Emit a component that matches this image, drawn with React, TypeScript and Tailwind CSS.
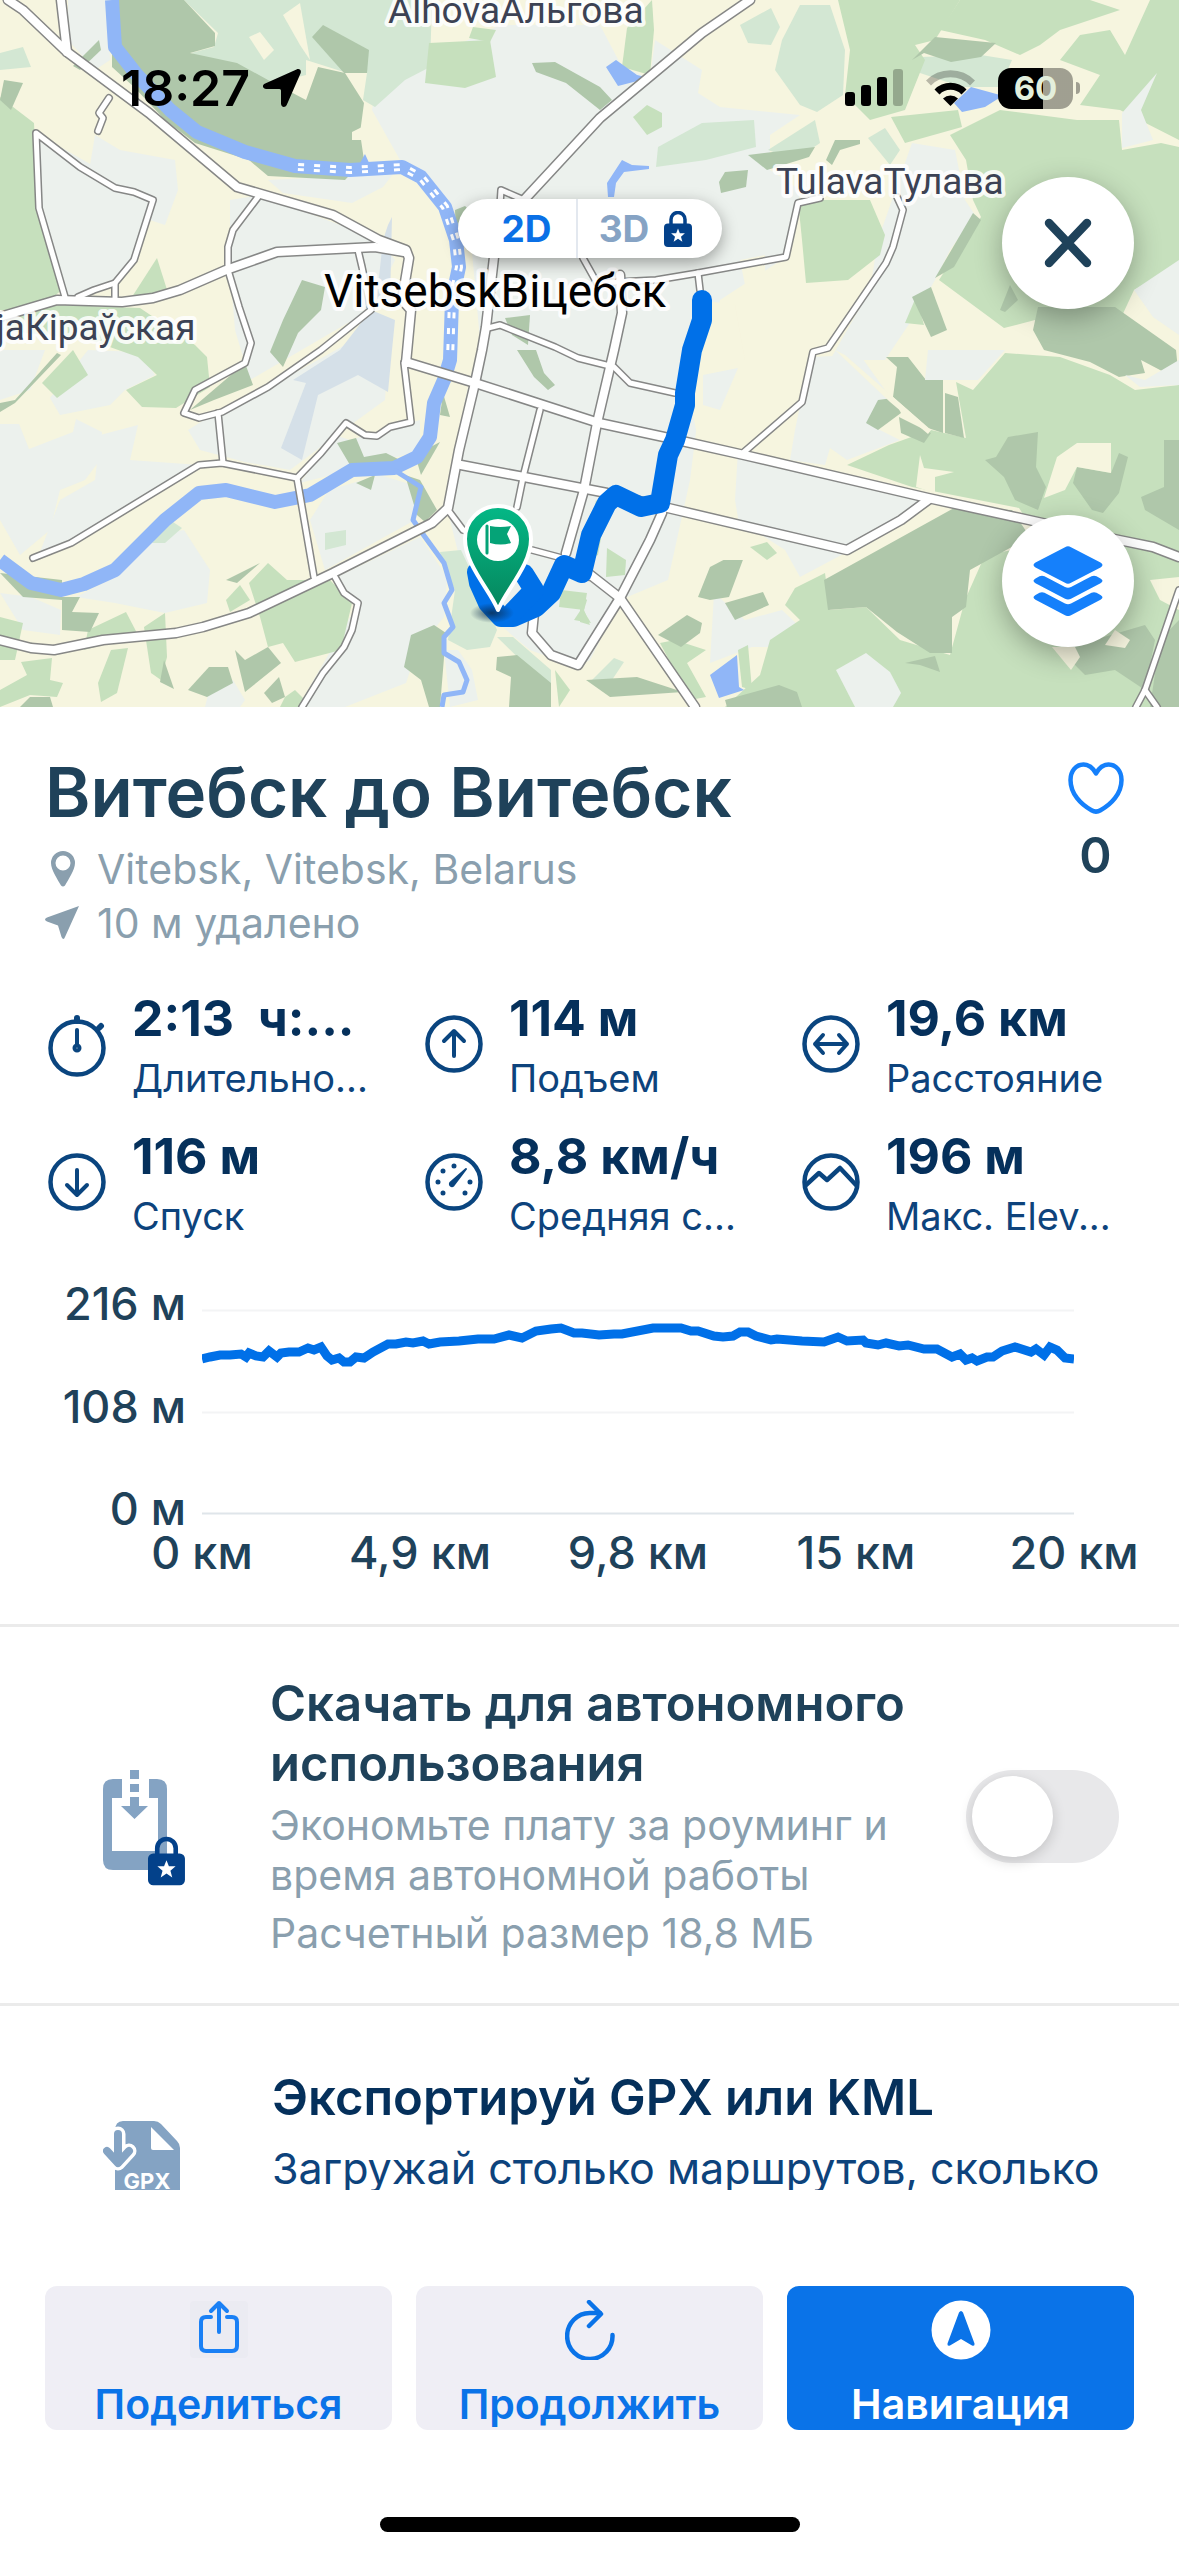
import type { ReactNode } from "react"

const urban = [
  "375,95 425,60 500,25 600,25 622,67 650,78 655,40 702,70 698,93 720,107 800,115 770,135 770,170 800,190 798,210 786,257 720,300 700,400 690,480 668,580 620,600 590,660 575,667 530,650 470,600 450,520 465,400 480,340 470,230 430,180 400,160 372,110",
  "36,133 153,200 134,260 115,287 65,297 40,207",
  "95,135 120,150 175,160 178,190 165,225 135,215 90,165",
  "230,200 260,195 380,240 395,260 370,310 250,380 235,330 230,270",
  "68,0 108,0 110,60 95,70 68,40",
  "125,55 130,37 142,30 153,50 155,57 148,78",
  "268,180 393,174 383,187 352,203 283,193",
  "0,424 19,424 29,449 73,432 76,419 102,432 100,460 85,480 60,490 50,530 20,555 0,520",
  "100,435 138,425 130,460 200,465 75,545 40,552 60,500 95,480",
  "188,430 220,410 300,370 390,320 385,400 330,440 290,470 245,462 200,450",
  "0,350 45,350 30,390 0,400",
  "88,350 140,352 155,375 125,390 110,405 60,415 50,398",
  "76,597 115,577 145,537 184,530 210,570 207,603 165,613 115,603",
  "0,593 31,597 61,610 60,635 23,630",
  "329,490 380,475 413,485 415,520 325,570 310,520",
  "337,577 420,537 447,577 444,617 417,650 406,683 345,707 298,707 356,607",
  "300,483 335,435 350,440 420,420 420,450 370,465",
  "912,143 955,150 965,200 975,215 950,250 935,280 915,315 885,360 830,360 870,290 878,240",
  "810,357 860,355 890,397 870,425 900,440 847,460 830,448 825,465 790,460 795,430",
  "715,460 744,457 920,500 847,552 800,577 785,550 730,515 733,480",
  "714,593 745,620 782,610 800,627 779,647 752,647 710,663",
  "458,650 472,670 478,700 450,707 444,650",
  "210,687 233,680 245,700 240,707 205,707",
  "707,375 740,368 720,410 700,405",
]

const paleWoods = [
  "184,0 432,0 430,67 405,80 375,107 363,100 367,73 344,72 306,60 306,75 275,83 249,77 191,53 214,47 218,33",
  "0,53 23,47 31,67 0,70",
  "782,40 800,5 830,5 845,50 843,95 817,112 800,105 775,70",
  "740,25 771,8 780,27 771,45 748,43",
  "658,147 702,123 754,120 756,147 733,153 706,160 656,167",
  "768,150 815,120 820,143 795,160",
  "920,57 981,55 1012,60 1000,87 962,87 920,73",
  "440,552 461,550 469,567 497,630 490,647 467,650 448,640 455,590 444,567",
  "497,637 513,637 551,670 551,690",
  "325,533 346,530 346,545 325,550",
  "170,520 182,528 165,543 152,543",
  "592,680 614,658 624,662 610,683",
  "868,138 885,128 900,150 890,165",
]

const woods = [
  "429,43 490,40 496,77 465,88 425,83",
  "473,27 496,30 490,42 469,38",
  "0,97 34,123 38,207 65,287 50,300 23,313 0,313",
  "130,300 157,258 168,293 150,300",
  "0,308 60,305 140,308 195,345 207,357 210,387 176,408 142,407 126,390 157,375 138,357 90,340 0,330",
  "42,383 73,350 88,375 57,398",
  "249,583 268,563 287,580 330,580 352,603 341,650 295,662 283,643 268,647 260,617",
  "88,630 126,612 138,635 84,650",
  "144,627 165,613 167,657 161,680 151,673",
  "111,650 128,648 117,693 101,702 98,683",
  "0,617 23,623 15,660 0,660",
  "21,662 52,658 50,680 63,683 57,697 30,695 0,707 0,690 27,675",
  "226,600 240,585 250,600 230,612",
  "285,697 295,690 305,700 298,707 280,707",
  "555,670 570,690 559,707",
  "561,590 587,593 584,610 559,607",
  "582,608 591,623 574,620",
  "596,500 606,510 598,555 585,560",
  "607,548 626,560 625,575 606,577",
  "580,593 587,600 584,610 590,625 580,622",
  "838,0 960,0 935,40 915,45 925,60 905,110 870,120 845,95 850,50",
  "940,30 960,0 1090,0 1120,10 1060,30 1040,45 1020,55 985,40",
  "1060,60 1080,35 1110,30 1125,55 1150,0 1179,0 1179,140 1120,110 1080,105 1100,75",
  "950,135 1000,110 1077,120 1119,120 1122,150 1161,143 1179,147 1179,265 1134,290 1120,320 1035,320 1004,328 939,280 958,250 981,217 973,200 966,160",
  "627,28 652,0 654,30 650,75 622,67",
  "633,117 647,105 662,113 662,127 647,135",
  "891,117 958,110 962,127 905,143",
  "798,200 870,200 885,235 880,255 848,280 806,283 802,240",
  "905,323 916,297 924,325",
  "1005,353 973,390 956,382 966,438 931,430 889,445 847,465 912,487 1019,508 1040,540 1179,560 1179,385 1135,390 1110,375 1060,357",
  "785,605 795,588 825,573 830,610 866,607 900,640 950,655 965,600 985,555 1040,545 1179,555 1179,707 725,707 760,675 770,640 800,620",
  "750,547 767,542 777,553 767,560",
  "660,643 675,640 706,650 687,663 706,697 690,700",
  "738,650 748,645 752,690 742,687",
]

const denseWoods = [
  "115,0 184,0 215,33 215,46 190,53 237,63 268,80 306,100 318,67 345,73 364,103 360,133 364,160 345,180 268,176 249,160 195,143 165,120 134,87 112,67 112,45",
  "323,25 369,50 367,73 344,73 312,37",
  "532,63 555,62 600,87 612,100 600,110 566,83 536,72",
  "4,80 23,83 11,110 0,100",
  "99,40 101,50 80,70 73,66",
  "302,280 325,287 321,310 298,333 287,358 283,367 270,352 283,320",
  "0,403 15,400 57,353 61,355 15,403 0,412",
  "245,363 253,385 214,400 190,410",
  "226,580 260,563 237,583",
  "62,597 80,597 72,612 99,613 90,632 62,630",
  "0,573 23,597 62,600 62,580",
  "30,697 50,697 53,707 20,707",
  "188,690 209,667 228,667 233,683 207,697",
  "235,650 245,660 268,647 281,663 245,692 239,667",
  "264,693 279,677 285,697 272,703",
  "164,660 174,689 160,682",
  "411,635 434,625 446,633 440,707 429,707 421,680 404,667",
  "497,657 517,655 551,683 551,707 509,707 511,677 496,670",
  "337,443 356,438 364,457 386,453 400,460 395,470 350,465",
  "356,483 375,475 371,490",
  "405,475 420,480 437,510 425,522 417,515",
  "415,455 440,442 421,475",
  "443,393 450,417 440,415",
  "517,350 536,350 544,373 555,385 548,390 534,377",
  "505,318 530,315 528,345 512,335",
  "455,210 465,206 475,215 456,235",
  "719,182 725,172 748,170 746,187 721,193",
  "748,155 815,147 809,157 767,170",
  "826,160 835,140 860,140 860,144 840,150 832,165",
  "912,60 935,37 996,43 981,57 951,62 924,53",
  "973,213 981,220 954,267 935,278",
  "912,297 931,287 947,330 931,337",
  "1038,307 1115,307 1176,350 1179,380 1141,360 1145,373 1119,377 1090,362 1044,350 1033,330",
  "1000,310 1010,285 1018,300 1005,312",
  "886,357 908,357 926,380 943,380 943,433 928,428 893,397 897,367",
  "866,423 878,400 893,398 901,413 878,430",
  "899,417 931,433 924,443 901,433",
  "945,393 958,397 964,438 945,433",
  "939,350 966,353 978,373",
  "1008,437 1038,432 1036,467 1046,487 1038,510 1015,500 1004,477 985,460 996,457",
  "1077,467 1111,473 1119,453 1128,457 1119,493 1103,513 1092,510 1073,483",
  "1164,440 1179,440 1179,530 1145,510 1141,497 1164,487",
  "824,580 954,508 1012,510 1030,537 970,570 966,607 952,617 952,653 930,653 897,632 866,607 828,610",
  "698,597 710,567 733,555 744,557 729,597 710,600",
  "725,603 763,592 769,605 735,620",
  "658,635 687,615 702,623 700,633 681,647",
  "725,700 779,685 797,692 802,707 727,707",
  "586,680 637,677 683,692 610,697",
  "905,663 935,656 940,672 920,665",
  "1060,650 1145,625 1155,640 1145,690 1115,670 1085,675",
  "1160,640 1179,620 1179,707 1150,707",
]

const clearings = [
  "249,37 260,32 274,50 264,60",
  "283,15 300,3 310,60 300,45",
  "352,132 366,125 366,140 352,140",
  "1057,457 1077,443 1111,443 1111,473 1077,467 1065,490 1044,498",
  "920,455 924,468 954,472 935,477 935,493 916,487",
  "1052,647 1075,647 1080,657 1071,670",
  "835,350 845,355 931,430 928,434 890,402",
  "1115,630 1130,640 1125,648 1105,645",
  "1150,580 1179,577 1179,610 1160,600",
  "700,300 735,305 745,360 730,400 738,450 735,500 745,560 720,560 690,550 700,450 690,400",
  "740,260 765,255 765,290 745,285",
]

const fields = [
  "928,350 1005,350 978,380 947,380 925,380",
  "1122,113 1157,73 1141,110 1153,140 1122,148",
  "1134,290 1179,260 1179,335 1153,317",
  "836,670 866,653 890,672 901,693 893,707 855,707",
  "1125,375 1145,380 1179,360 1179,385 1140,387",
  "703,375 738,368 720,410 703,405",
]

const lakes = [
  "616,60 637,75 649,78 618,86 606,67",
  "622,160 632,165 649,166 649,169 624,172 616,183 614,197 608,197 607,183",
  "954,103 971,87 1000,95 1020,85 996,100 985,107 962,112",
  "710,675 737,655 739,687 744,690 719,698",
  "360,163 365,154 370,165",
]

const airfields = [
  "371,310 395,320 392,350 388,392 358,375 318,395 302,460 281,448 306,383 293,380 340,350",
  "388,225 392,217 390,300 376,305 383,240",
]

const mainRoads = [
  "8,0 23,10 67,52 149,113 237,187 333,215 379,240 406,250 409,258 402,300 411,310 406,363",
  "61,0 67,52",
  "0,317 57,300 122,302 153,298 180,290 226,270 277,252 375,247 404,252",
  "0,640 31,648 54,650 103,640 176,633 203,627 249,613 333,573 432,523 448,508 459,450 475,383 482,350 486,327 494,257",
  "406,362 475,383 599,423 664,437 744,455 928,498 1038,522 1119,540 1153,547 1179,557",
  "524,200 600,118 702,33 750,0",
  "461,465 524,477 607,493 668,508 847,550 901,520 928,500",
  "620,275 622,313 614,350 597,423 584,490 566,553",
  "662,513 650,540 620,598 578,665 551,655 532,633 534,613",
  "588,573 620,598 695,707",
]

const sideRoads = [
  "65,297 39,208 36,133 80,167 115,188 134,192 153,200 134,260 115,283 115,300",
  "78,297 94,290 115,283",
  "109,98 99,113 103,118 98,131",
  "258,197 233,230 228,247 228,270 239,307 251,343 245,363 195,390 184,413 199,418 222,412 268,387 321,350 371,310 362,267 358,250",
  "218,413 223,463",
  "33,558 71,543 199,465 222,463 297,478 321,453 346,423 365,435 377,436 390,427 411,422 404,363",
  "297,478 314,577",
  "335,577 344,593 358,603 352,630 344,647 323,673 302,707",
  "540,410 524,473 517,507",
  "583,258 597,283 656,280 698,273 786,257 798,203 820,198",
  "698,273 700,290",
  "488,328 500,325 555,347 578,358 614,367 630,383 675,393",
  "500,205 501,190 524,200",
  "897,197 903,210 893,247 886,263 828,348 813,352 802,402 744,452",
  "448,510 463,530 532,550 562,558 589,577",
  "1179,590 1145,690 1136,707",
  "1145,690 1157,707",
]

const river =
  "112,0 115,47 137,75 170,110 197,132 245,152 295,166 350,170 402,167 421,177 445,207 456,240 459,267 452,300 450,360 444,380 434,403 430,437 417,457 394,468 352,470 310,495 275,502 226,490 199,493 165,520 115,570 84,584 61,590 31,583 0,560"
const rapids = "298,167 350,170 402,167 421,177 445,207 456,240 459,267 452,300 450,360"
const stream =
  "394,470 421,487 413,520 425,537 444,563 452,590 444,603 453,627 444,637 444,653 459,662 467,680 463,692 444,695 442,707"
const route =
  "702,300 702,320 692,350 685,393 685,405 675,440 668,455 660,503 641,507 616,495 607,503 591,535 582,573 564,565 551,593 536,607 513,617 501,617 488,603 479,583 477,572"

const elevation =
  "0,50 8,48 18,46 28,46 39,45 44,48 47,44 54,47 61,48 67,42 75,48 79,44 87,43 97,43 106,39 112,41 119,38 125,47 130,51 137,49 142,53 148,53 154,48 162,49 171,43 186,35 194,35 204,33 211,34 221,32 227,35 238,33 257,32 276,30 292,30 307,26 320,29 334,22 349,20 359,19 372,24 380,24 397,26 412,25 420,25 451,19 479,19 489,22 496,22 512,27 521,28 531,27 538,23 546,23 554,27 569,31 575,30 600,32 622,33 636,28 645,32 661,31 664,34 676,36 684,34 697,37 706,36 722,40 735,40 750,48 758,45 764,51 770,49 775,52 785,48 791,48 800,42 813,38 829,43 834,40 842,46 848,38 855,41 863,49 872,50"

const STAR = "M0-6 1.6-2 6-2 2.6 1 3.8 5.4 0 2.8-3.8 5.4-2.6 1-6-2-1.6-2Z"

function Areas({ shapes, fill }: { shapes: string[]; fill: string }) {
  return (
    <g fill={fill}>
      {shapes.map((points) => (
        <polygon key={points} points={points} />
      ))}
    </g>
  )
}

function Roads({ lines, stroke, width }: { lines: string[]; stroke: string; width: number }) {
  return (
    <g fill="none" stroke={stroke} strokeWidth={width} strokeLinejoin="round" strokeLinecap="round">
      {lines.map((points) => (
        <polyline key={points} points={points} />
      ))}
    </g>
  )
}

function PlaceName({ x, y, size, fill, children }: { x: number; y: number; size: number; fill: string; children: string }) {
  return (
    <text
      x={x}
      y={y}
      fontSize={size}
      fill={fill}
      stroke="#fff"
      strokeWidth={8}
      strokeLinejoin="round"
      strokeOpacity={0.85}
      paintOrder="stroke"
      fontFamily="Roboto, sans-serif"
    >
      {children}
    </text>
  )
}

function RouteMap() {
  return (
    <svg viewBox="0 0 1179 707" preserveAspectRatio="xMidYMid slice" className="block size-full" aria-label="Карта маршрута">
      <defs>
        <linearGradient id="pin" x1="0" y1="0" x2="0" y2="1">
          <stop offset="0" stopColor="#04b886" />
          <stop offset="1" stopColor="#06855c" />
        </linearGradient>
        <radialGradient id="pin-shadow">
          <stop offset="0" stopColor="#0b2a4a" stopOpacity="0.8" />
          <stop offset="1" stopColor="#0b2a4a" stopOpacity="0" />
        </radialGradient>
      </defs>
      <rect width="1179" height="707" fill="#f6f5df" />
      <Areas shapes={urban} fill="#ecf1ed" />
      <Areas shapes={paleWoods} fill="#d3e7d3" />
      <Areas shapes={woods} fill="#c6e0bd" />
      <Areas shapes={denseWoods} fill="#afc7aa" />
      <Areas shapes={clearings} fill="#f6f5df" />
      <Areas shapes={fields} fill="#ecf1ed" />
      <Areas shapes={airfields} fill="#d5e0e8" />
      <Areas shapes={lakes} fill="#90b6f7" />
      <polyline points={river} fill="none" stroke="#90b6f7" strokeWidth="14" strokeLinejoin="round" />
      <polyline points={stream} fill="none" stroke="#90b6f7" strokeWidth="5" strokeLinejoin="round" />
      <polyline points={rapids} fill="none" stroke="#fff" strokeWidth="8" strokeDasharray="6 10" />
      <polyline points={rapids} fill="none" stroke="#90b6f7" strokeWidth="2" />
      <Roads lines={sideRoads} stroke="#868786" width={8} />
      <Roads lines={mainRoads} stroke="#868786" width={11} />
      <Roads lines={sideRoads} stroke="#fff" width={5} />
      <Roads lines={mainRoads} stroke="#fff" width={8} />
      <Roads lines={[route, "513,612 534,590 524,574"]} stroke="#0070e8" width={20} />

      <ellipse cx="492" cy="613" rx="22" ry="10" fill="url(#pin-shadow)" />
      <path
        d="M498 610C490 590 465 565 465 539a33 33 0 0 1 66 0c0 26-25 51-33 71Z"
        fill="url(#pin)"
        stroke="#fff"
        strokeWidth="4"
        strokeLinejoin="round"
      />
      <circle cx="498" cy="540" r="21" fill="#fff" />
      <path d="M487 526v27" stroke="#05a377" strokeWidth="3" strokeLinecap="round" />
      <path d="M490 526q10 2 21 0l-4 8 4 9q-10 3-21 0Z" fill="#05a377" />

      <PlaceName x={388} y={23} size={37} fill="#3c4254">AlhovaАльгова</PlaceName>
      <PlaceName x={776} y={194} size={37} fill="#3c4254">TulavaТулава</PlaceName>
      <PlaceName x={-4} y={340} size={37} fill="#3c4254">jaКіраўская</PlaceName>
      <PlaceName x={324} y={307} size={46} fill="#000">VitsebskВіцебск</PlaceName>
    </svg>
  )
}

function StatusBar() {
  return (
    <div className="absolute inset-x-0 top-0 flex h-44 items-center justify-between pr-[99px] pl-[121px] text-black">
      <div className="flex items-center gap-3">
        <span className="text-[50px] leading-none font-semibold">18:27</span>
        <svg width="40" height="40" viewBox="0 0 40 40" fill="currentColor" aria-hidden="true">
          <path d="M34.500 1.500 3.200 15.500C-.5 17.200.6 21 4.300 21H17.500Q19 21 19 22.500V35.500C19 39.300 23.200 40.200 24.800 36.700L38.500 5.500C39.800 2.300 37.500.2 34.500 1.500Z" />
        </svg>
      </div>
      <div className="flex items-center gap-[23px]">
        <svg width="58" height="38" viewBox="0 0 58 38" aria-label="Сигнал">
          <rect y="23" width="10" height="14" rx="3" />
          <rect x="16" y="16" width="10" height="21" rx="3" />
          <rect x="32" y="8" width="10" height="29" rx="3" />
          <rect x="48" width="10" height="37" rx="3" opacity="0.25" />
        </svg>
        <svg width="49" height="38" viewBox="0 0 49 38" fill="none" stroke="#000" strokeWidth="7" aria-label="Wi-Fi">
          <path d="M2.500 14a31 31 0 0 1 44 0" opacity="0.25" />
          <path d="M11 23a19 19 0 0 1 27 0" />
          <path d="M24.500 37 17 29.500a11 11 0 0 1 15 0Z" fill="#000" stroke="none" />
        </svg>
        <div className="flex items-center gap-[3px]">
          <div className="flex h-[41px] w-[75px] items-center justify-center rounded-[13px] bg-linear-to-r from-black from-60% to-black/35 to-60% text-[33px] leading-none font-bold text-[#e3efdc]">
            60
          </div>
          <div className="h-3 w-1 rounded-r-full bg-black/35" />
        </div>
      </div>
    </div>
  )
}

function StarLock({ className }: { className: string }) {
  return (
    <svg viewBox="0 0 28 36" className={className} aria-hidden="true">
      <path d="M7 14V8.500a7 7 0 0 1 14 0V14" fill="none" stroke="#03418a" strokeWidth="3.500" />
      <rect y="12.500" width="28" height="23.500" rx="4" fill="#03418a" />
      <path d={STAR} transform="translate(14 24.500) scale(1.150)" fill="#fff" />
    </svg>
  )
}

function RoundButton({ label, className, children }: { label: string; className: string; children: ReactNode }) {
  return (
    <button
      type="button"
      aria-label={label}
      className={`absolute right-[45px] flex size-[132px] items-center justify-center rounded-full bg-white shadow-[0_8px_28px_rgba(0,0,0,0.3)] ${className}`}
    >
      {children}
    </button>
  )
}

interface StatProps {
  icon: ReactNode
  value: string
  label: string
}

function Stat({ icon, value, label }: StatProps) {
  return (
    <div className="flex items-center gap-[26px]">
      <svg
        viewBox="0 0 58 76"
        className="h-[76px] w-[58px] shrink-0"
        fill="none"
        stroke="#0a457f"
        strokeWidth="4"
        strokeLinecap="round"
        strokeLinejoin="round"
        aria-hidden="true"
      >
        {icon}
      </svg>
      <dl className="flex min-w-0 flex-col-reverse whitespace-nowrap">
        <dt className="text-[38px] leading-[60px] text-[#0d437c]">{label}</dt>
        <dd className="text-[50px] leading-[60px] font-bold whitespace-pre text-[#05305b]">{value}</dd>
      </dl>
    </div>
  )
}

const ring = <circle cx="29" cy="34" r="26.500" strokeWidth="4.500" />

const stats: StatProps[] = [
  {
    value: "2:13  ч:...",
    label: "Длительно...",
    icon: (
      <>
        <circle cx="29" cy="38" r="26.500" strokeWidth="4.500" />
        <path d="M29 8v3M51 18l2-2" strokeWidth="6" />
        <path d="M29 20v15" />
        <circle cx="29" cy="38" r="2.500" strokeWidth="4" />
      </>
    ),
  },
  { value: "114 м", label: "Подъем", icon: <>{ring}<path d="M29 46V22M19 31l10-10 10 10" /></> },
  { value: "19,6 км", label: "Расстояние", icon: <>{ring}<path d="M13 34h32M21 25l-8 9 8 9M37 25l8 9-8 9" /></> },
  { value: "116 м", label: "Спуск", icon: <>{ring}<path d="M29 22v24M19 37l10 10 10-10" /></> },
  {
    value: "8,8 км/ч",
    label: "Средняя с...",
    icon: (
      <>
        {ring}
        <path d="M41 21 25.500 34.500a2 2 0 0 0 3 3Z" fill="#0a457f" strokeWidth="2" />
        <path d="M29 18h0M18 23h0M13 34h0M18 45h0M40 45h0M45 34h0" strokeWidth="5" />
      </>
    ),
  },
  { value: "196 м", label: "Макс. Elev...", icon: <>{ring}<path d="m4 37 13-12 8 7 13-12 16 17" strokeWidth="4.500" /></> },
]

function ElevationChart() {
  return (
    <figure className="mt-[34px] pr-[105px] pl-[45px] text-[45px] leading-[48px] font-medium text-[#1f425a]">
      <div className="flex">
        <div className="flex h-[253px] w-[141px] flex-col justify-between text-right">
          <span>216 м</span>
          <span>108 м</span>
          <span>0 м</span>
        </div>
        <div className="ml-4 flex-1 pt-[29px]">
          <svg viewBox="0 0 872 206" preserveAspectRatio="none" className="h-[206px] w-full" aria-label="Профиль высоты">
            <path d="M0 1.500h872M0 103.500h872" stroke="#f3f4f5" strokeWidth="2" />
            <path d="M0 204.500h872" stroke="#dfe5ea" strokeWidth="2" />
            <polyline points={elevation} fill="none" stroke="#0070e8" strokeWidth="9" />
          </svg>
        </div>
      </div>
      <div className="-mt-1 ml-[157px] flex justify-between whitespace-nowrap">
        {["0 км", "4,9 км", "9,8 км", "15 км", "20 км"].map((km) => (
          <span key={km} className="flex w-0 justify-center">
            {km}
          </span>
        ))}
      </div>
    </figure>
  )
}

export default function App() {
  return (
    <div className="flex h-screen flex-col overflow-hidden bg-white font-['Inter','Liberation_Sans',sans-serif]">
      <header className="relative h-[707px] shrink-0 overflow-hidden">
        <RouteMap />
        <StatusBar />
        <div className="absolute top-[199px] left-1/2 flex h-[59px] w-[264px] -translate-x-1/2 rounded-full bg-white text-[37px] font-bold shadow-[0_5px_16px_rgba(0,0,0,0.35)]">
          <button type="button" className="flex w-[120px] items-center justify-center border-r-2 border-[#e3e8ef] pl-5 text-[#0a70e6]">
            2D
          </button>
          <button type="button" className="flex flex-1 items-center justify-center gap-[15px] pr-2 text-[#86a3c4]">
            3D
            <StarLock className="h-9 w-7" />
          </button>
        </div>
        <RoundButton label="Закрыть" className="top-[177px]">
          <svg width="48" height="50" viewBox="0 0 48 50" stroke="#1f425a" strokeWidth="8.500" strokeLinecap="round">
            <path d="m5 5 38 40M43 5 5 45" />
          </svg>
        </RoundButton>
        <RoundButton label="Слои карты" className="top-[515px]">
          <svg width="70" height="70" viewBox="0 0 70 70" fill="#1580fb">
            <path d="M32 1.200Q35-.5 38 1.200L67.500 16.500Q71.500 19 67.500 21.500L38 36.800Q35 38.500 32 36.800L2.500 21.500Q-1.500 19 2.500 16.500Z" />
            <path d="m2.500 32.500 4-2.200q2.500-1.200 5 0L32 41q3 1.500 6 0l20.500-10.700q2.500-1.200 5 0l4 2.200q4 2.300 0 4.800L38 52.800q-3 1.500-6 0L2.500 37.300q-4-2.500 0-4.800Z" />
            <path d="m2.500 49 4-2.200q2.500-1.200 5 0L32 57.500q3 1.500 6 0l20.500-10.700q2.500-1.200 5 0l4 2.200q4 2.300 0 4.800L38 69.300q-3 1.500-6 0L2.500 53.800q-4-2.500 0-4.800Z" />
          </svg>
        </RoundButton>
      </header>

      <main className="min-h-0 flex-1 overflow-hidden">
        <section className="flex items-start justify-between pt-[43px] pr-[45px] pl-[45px]">
          <div className="text-[41px] leading-[54px] text-[#8a9fae]">
            <h1 className="mb-2 text-[69px] leading-[84px] font-semibold text-[#1f425a]">Витебск до Витебск</h1>
            <p className="flex items-center gap-[18px]">
              <svg width="34" height="36" viewBox="0 0 34 36" fill="currentColor" aria-hidden="true">
                <path
                  fillRule="evenodd"
                  d="M18 0a12 12 0 0 1 12 12c0 7-7 17-10 22.500q-2 2-4 0C13 29 6 19 6 12A12 12 0 0 1 18 0Zm0 4.500a7.500 7.500 0 1 0 0 15 7.500 7.500 0 0 0 0-15Z"
                />
              </svg>
              Vitebsk, Vitebsk, Belarus
            </p>
            <p className="flex items-center gap-[18px]">
              <svg width="34" height="34" viewBox="0 0 34 34" fill="currentColor" aria-hidden="true">
                <path d="M34 0 20 31q-1.500 4-3.500 0L13 19.500 2 15.500q-4-2 0-4Z" />
              </svg>
              10 м удалено
            </p>
          </div>
          <button type="button" aria-label="В избранное" className="flex w-[77px] flex-col items-center pt-3 text-[#1f425a]">
            <svg width="56" height="52" viewBox="0 0 56 52" fill="none" stroke="#1580fb" strokeWidth="4.500" strokeLinejoin="round">
              <path d="M28 11.500C24.500 5 20 2.500 15.500 2.500 8 2.500 2.500 9 2.500 18 2.500 32 13 42.500 23.500 48.300Q28 51 32.500 48.300C43 42.500 53.500 32 53.500 18 53.500 9 48 2.500 40.500 2.500 36 2.500 31.500 5 28 11.500Z" />
            </svg>
            <span className="mt-3 text-[49px] leading-[60px] font-semibold">0</span>
          </button>
        </section>

        <section className="mt-[38px] grid grid-cols-3 gap-x-12 gap-y-[18px] px-12">
          {stats.map((stat) => (
            <Stat key={stat.label} {...stat} />
          ))}
        </section>

        <ElevationChart />

        <section className="mt-[47px] flex items-center border-y-[3px] border-[#ebebeb] pt-[47px] pr-[60px] pb-[45px] pl-[103px]">
          <svg width="82" height="140" viewBox="0 0 82 140" className="shrink-0" aria-hidden="true">
            <g transform="translate(0 24)" fill="#84a3c3">
              <path d="M10 9h9v19H9v53h46V28H46V9h8q10 0 10 10v71q0 10-10 10H10Q0 100 0 90V19Q0 9 10 9Z" />
              <path d="M27 0h9v9h-9zM27 14h9v8h-9zM27 27h9v9h9L31.500 49 18 36h9z" />
            </g>
            <g transform="translate(45 91) scale(1.320)">
              <path d="M7 14V8.500a7 7 0 0 1 14 0V14" fill="none" stroke="#03418a" strokeWidth="3.500" />
              <rect y="12.500" width="28" height="24" rx="4" fill="#03418a" />
              <path d={STAR} transform="translate(14 24.500) scale(1.150)" fill="#fff" />
            </g>
          </svg>
          <label htmlFor="offline" className="ml-[85px] flex-1">
            <span className="block text-[49px] leading-[60px] font-semibold text-[#1f425a]">
              Скачать для автономного
              <br />
              использования
            </span>
            <span className="mt-[6px] block text-[41px] leading-[50px] text-[#8a9fae]">
              Экономьте плату за роуминг и
              <br />
              время автономной работы
            </span>
            <span className="mt-2 block text-[41px] leading-[50px] text-[#8a9fae]">Расчетный размер 18,8 МБ</span>
          </label>
          <input
            id="offline"
            type="checkbox"
            role="switch"
            className="h-[93px] w-[153px] shrink-0 appearance-none rounded-full bg-[#e8e8ea] p-[6px] before:block before:size-[81px] before:rounded-full before:bg-white before:shadow-[0_4px_14px_rgba(0,0,0,0.16)] checked:bg-[#0a73e8] checked:before:ml-auto"
          />
        </section>

        <section className="flex pt-[62px] pr-[45px] pl-[103px]">
          <svg width="78" height="100" viewBox="0 0 78 100" className="mt-[53px] shrink-0" aria-hidden="true">
            <path d="M20 0h31q4 0 7 3l16 17q3 3 3 7v63q0 10-10 10H22q-10 0-10-10V10Q12 0 20 0Z" fill="#84a3c3" />
            <path d="M48 6v21q0 2 2 2h21Z" fill="#fff" />
            <path d="M15 13v28M4 30l11 12 11-12" fill="none" stroke="#fff" strokeWidth="15" strokeLinecap="round" strokeLinejoin="round" />
            <path d="M15 13v28M4 30l11 12 11-12" fill="none" stroke="#84a3c3" strokeWidth="8" strokeLinecap="round" strokeLinejoin="round" />
            <text x="44" y="68" textAnchor="middle" fontSize="22" fontWeight="700" fill="#fff">
              GPX
            </text>
          </svg>
          <div className="ml-[91px] whitespace-nowrap">
            <h2 className="text-[49px] leading-[60px] font-semibold text-[#05305b]">Экспортируй GPX или KML</h2>
            <p className="mt-[14px] text-[43px] leading-[52px] text-[#0d437c]">Загружай столько маршрутов, сколько</p>
          </div>
        </section>
      </main>

      <footer className="flex h-[366px] shrink-0 flex-col items-center justify-between bg-white px-[45px] pt-24 pb-6">
        <div className="grid w-full grid-cols-3 gap-6 text-[41px] leading-[52px] font-semibold">
          <button type="button" className="flex h-36 flex-col items-center justify-between rounded-xl bg-[#efeef5] pt-[14px] text-[#0a73e8]">
            <svg width="58" height="60" viewBox="0 0 58 60" fill="none" stroke="#1a80f5" strokeWidth="4" strokeLinecap="round" strokeLinejoin="round">
              <rect y="1" width="58" height="57" rx="4" fill="#ebebf2" stroke="none" />
              <path d="M21 17h-5q-5 0-5 5v24q0 5 5 5h26q5 0 5-5V22q0-5-5-5h-5" />
              <path d="M29 32V3M21 11l8-8 8 8" />
            </svg>
            Поделиться
          </button>
          <button type="button" className="flex h-36 flex-col items-center justify-between rounded-xl bg-[#efeef5] pt-[14px] text-[#0a73e8]">
            <svg width="50" height="60" viewBox="0 0 50 60" fill="none" stroke="currentColor" strokeWidth="4.500" strokeLinecap="round" strokeLinejoin="round">
              <path d="M47.500 35A22.700 23 0 1 1 25 13h10" />
              <path d="m24 2 12 12-12 12" />
            </svg>
            Продолжить
          </button>
          <button type="button" className="flex h-36 flex-col items-center justify-between rounded-xl bg-[#0a73e8] pt-[14px] text-white">
            <svg width="60" height="60" viewBox="0 0 60 60">
              <circle cx="30" cy="30" r="29.500" fill="#fff" />
              <path d="M28 12.500q2-3 4 0l11.500 31q.5 3-2.500 2L30 39l-11 6.500q-3 1-2.500-2Z" fill="#0a73e8" />
            </svg>
            Навигация
          </button>
        </div>
        <div className="h-[15px] w-[420px] rounded-full bg-black" />
      </footer>
    </div>
  )
}
